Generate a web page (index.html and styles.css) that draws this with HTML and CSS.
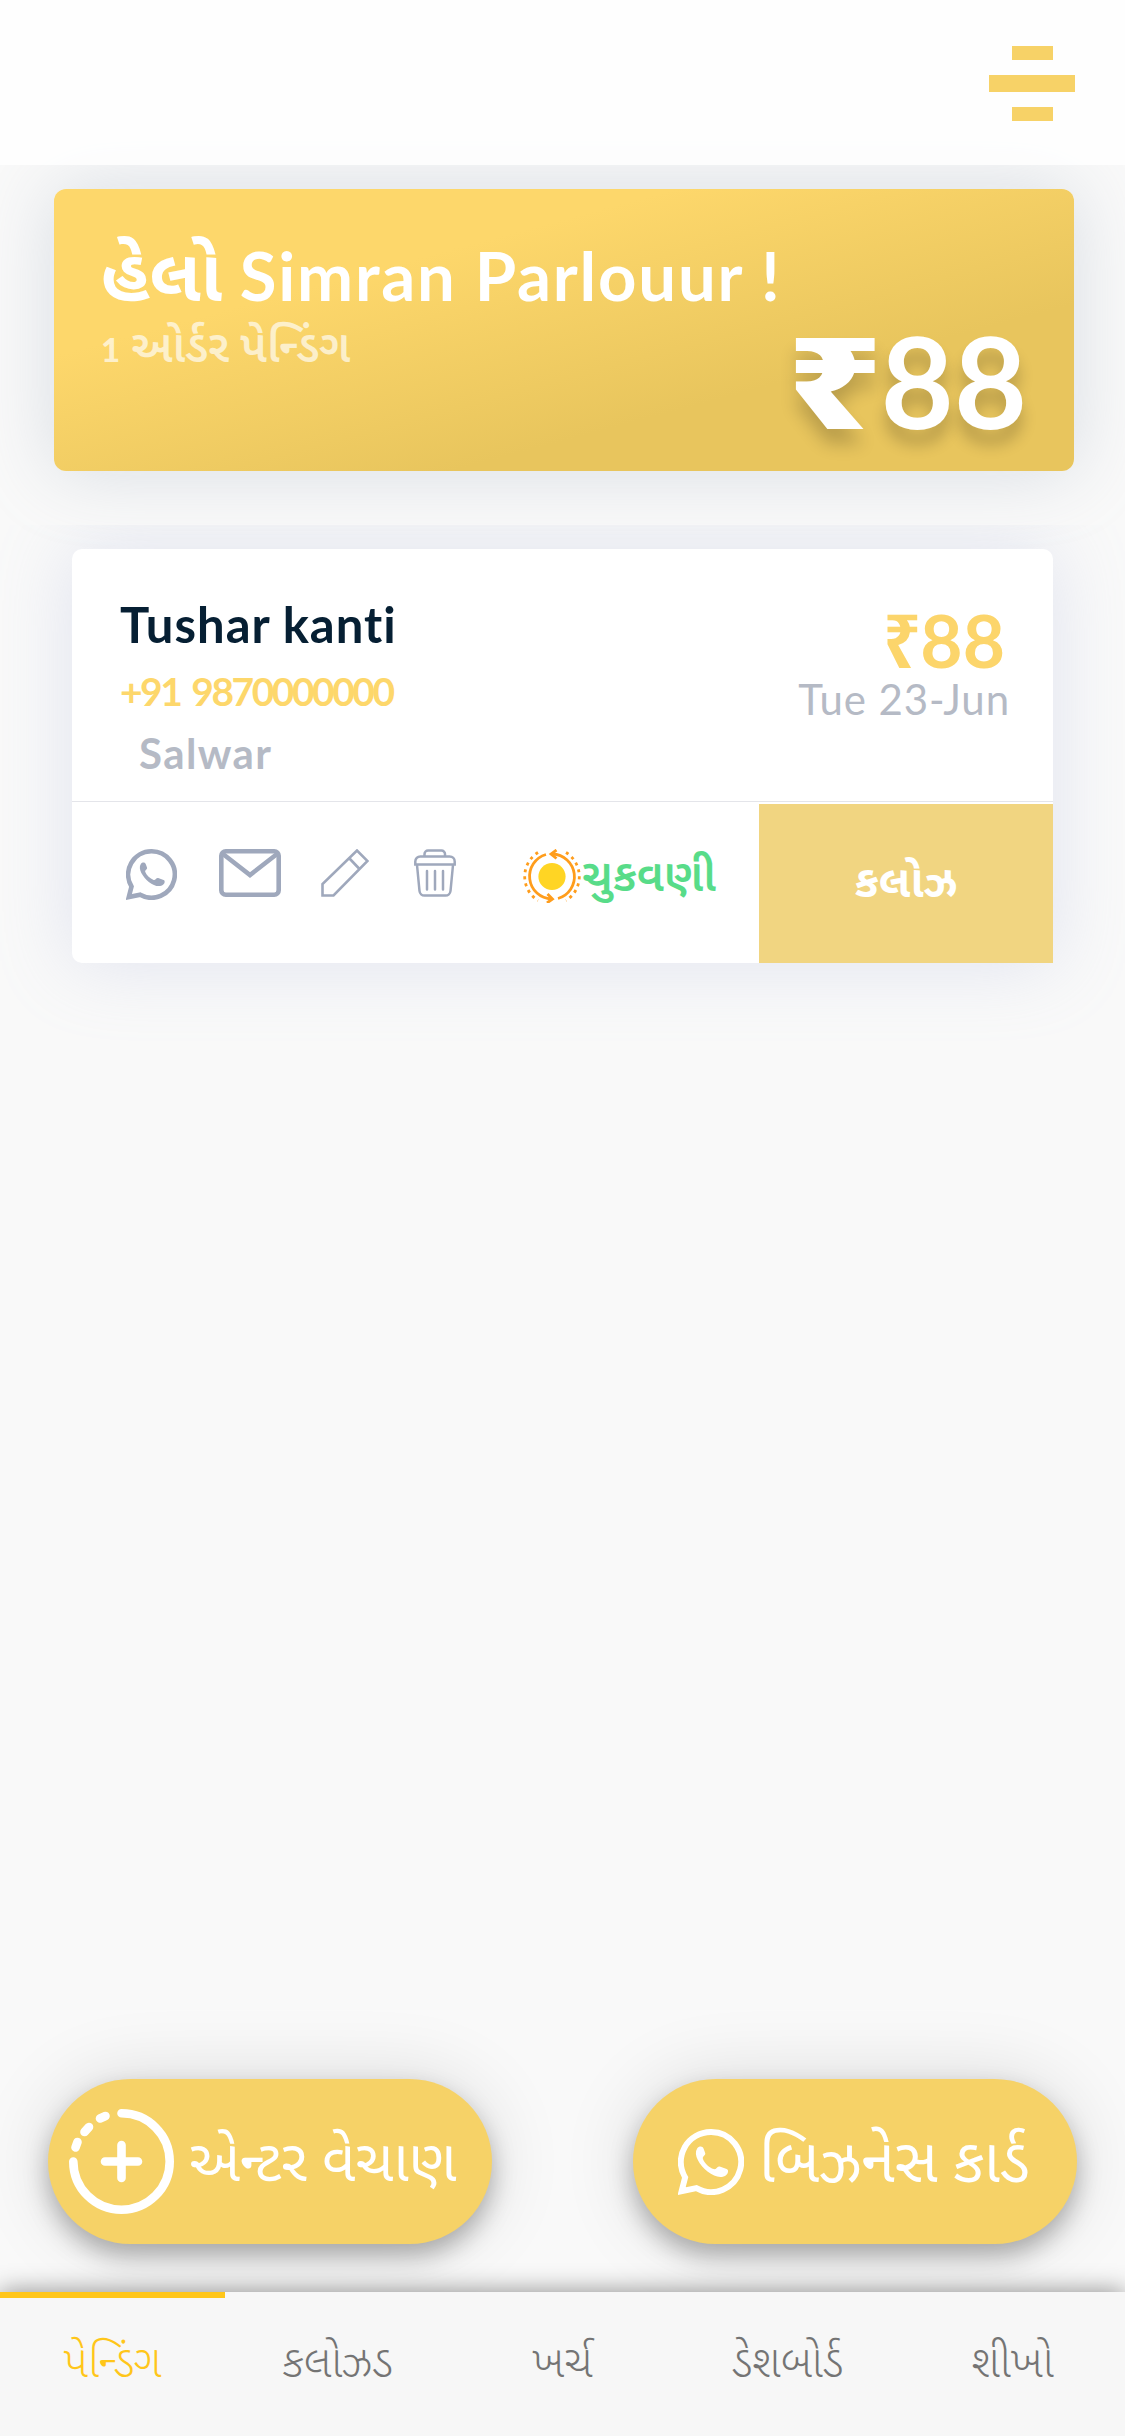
FILE: index.html
```html
<!DOCTYPE html>
<html lang="gu">
<head>
<meta charset="utf-8">
<title>Simran Parlouur</title>
<link rel="stylesheet" href="styles.css">
</head>
<body>
<div class="screen">
  <header class="topbar">
    <button class="menu" aria-label="Menu"><span class="bar"></span><span class="bar bar-wide"></span><span class="bar"></span></button>
  </header>
  <section class="summary">
    <h1 class="hello">હેલો <span class="shop">Simran Parlouur !</span></h1>
    <div class="pending"><span class="count">1</span> ઓર્ડર પેન્ડિંગ</div>
    <div class="total"><span class="rupee">₹</span>88</div>
  </section>
  <main class="orders">
    <article class="order">
      <div class="details">
        <div class="who">
          <div class="name">Tushar kanti</div>
          <div class="phone">+91 9870000000</div>
          <div class="item">Salwar</div>
        </div>
        <div class="due">
          <div class="price"><span class="rupee">₹</span>88</div>
          <div class="date">Tue 23-Jun</div>
        </div>
      </div>
      <div class="actions">
        <div class="tools">
          <svg class="ic-wa" viewBox="0 0 51 51"><path d="M25.500 2.300a23.200 23.200 0 1 1-11.300 43.400L2.800 48l2.700-10.500A23.200 23.200 0 0 1 25.500 2.300z" fill="none" stroke="currentColor" stroke-width="4.600"/><path d="M14.800 15c1.500-2 4.300-1.900 5 .2l1.200 3.400c.7 2-2.500 2.400-1.700 4.500 1.300 3.500 4.800 6.500 8.300 7.900 2 .7 2.600-2.700 4.600-2l5.400 1.900c1.700.6 1.300 3.300-.3 4.600-3.200 2.700-8.900 1.900-14.500-2.600-6-4.900-11.200-13-8-17.900z" fill="currentColor"/></svg>
          <svg class="ic-mail" viewBox="0 0 62 48"><rect x="2.300" y="2.300" width="57.400" height="43.400" rx="4.500" fill="none" stroke="currentColor" stroke-width="4.600"/><path d="M4 5l27 21L58 5" fill="none" stroke="currentColor" stroke-width="4.600"/></svg>
          <svg class="ic-pen" viewBox="0 0 48 48"><path d="M1.500 46.500V35L36 1.500 46.500 12 12.500 46.500zM28.500 9.500l10 10.500" fill="none" stroke="currentColor" stroke-width="2.600"/></svg>
          <svg class="ic-bin" viewBox="0 0 42 48"><g fill="none" stroke="currentColor" stroke-width="2.500"><path d="M10.500 7.500V5a3.500 3.500 0 0 1 3.500-3.500h13.500A3.500 3.500 0 0 1 31 5v2.500M1.300 15.500v-3a5 5 0 0 1 5-5h29.400a5 5 0 0 1 5 5v3zM3 16l2.500 26a5 5 0 0 0 5 4.500h21a5 5 0 0 0 5-4.500L39 16"/><path d="M13 22v18.500M21 22v18.500M29 22v18.500" stroke-linecap="round"/></g></svg>
        </div>
        <div class="pay">
          <svg class="ic-sun" viewBox="0 0 60 54"><circle cx="30" cy="27.500" r="13.600" fill="#ffd524"/><g fill="none" stroke="#ff9d1c" stroke-width="2.800"><path d="M24 5.500A22.700 22.700 0 0 0 29.500 50M36 49.500A22.700 22.700 0 0 0 30.500 5"/><path d="M25.500 45l5 5-5.500 4M34.500 1l-5.500 4 5.500 4.500"/><path d="M44 3.500A28.300 28.300 0 0 1 44 51.500M16 3.500A28.300 28.300 0 0 0 16 51.500" stroke-dasharray="3 4.100"/></g></svg>
          <span class="pay-label">ચુકવણી</span>
        </div>
        <button class="close"><span>કલોઝ</span></button>
      </div>
    </article>
  </main>
  <div class="fabs">
    <button class="fab fab-sale">
      <svg class="ic-plus" viewBox="0 0 105 105"><g fill="none" stroke="#fff" stroke-width="8.600" stroke-linecap="round"><path d="M52.500 4.300A48.200 48.200 0 1 1 4.300 52.500M52.500 36v33M36 52.500h33M6.500 38.500l2-5.500M15.500 23l4.500-5M31 9.500l5.500-2.500"/></g></svg>
      <span class="fab-label">એન્ટર વેચાણ</span>
    </button>
    <button class="fab fab-card">
      <svg class="ic-wa-big" viewBox="0 0 51 51"><path d="M25.500 2.300a23.200 23.200 0 1 1-11.300 43.400L2.800 48l2.700-10.500A23.200 23.200 0 0 1 25.500 2.300z" fill="none" stroke="currentColor" stroke-width="4.600"/><path d="M14.800 15c1.500-2 4.300-1.900 5 .2l1.200 3.400c.7 2-2.500 2.400-1.700 4.500 1.300 3.500 4.800 6.500 8.300 7.900 2 .7 2.600-2.700 4.600-2l5.400 1.900c1.700.6 1.300 3.300-.3 4.600-3.200 2.700-8.900 1.900-14.500-2.600-6-4.900-11.200-13-8-17.900z" fill="currentColor"/></svg>
      <span class="fab-label">બિઝનેસ કાર્ડ</span>
    </button>
  </div>
  <nav class="tabs">
    <a class="tab active">પેન્ડિંગ</a>
    <a class="tab">કલોઝડ</a>
    <a class="tab">ખર્ચ</a>
    <a class="tab">ડેશબોર્ડ</a>
    <a class="tab">શીખો</a>
  </nav>
</div>
</body>
</html>
```
FILE: styles.css
```css
* { box-sizing: border-box; }
body { margin: 0; background: #f9f9f9; font-family: Lato, "Noto Sans Gujarati", "Noto Sans", sans-serif; }
button { border: 0; padding: 0; background: none; font: inherit; color: inherit; }
svg { display: block; flex: none; }
.screen { width: 1125px; height: 2436px; display: flex; flex-direction: column; overflow: hidden; }
.topbar { height: 165px; flex: none; z-index: 1; background: rgba(255,255,255,.82); padding: 46px 50px 0 0; display: flex; justify-content: flex-end; align-items: flex-start; }
.menu { width: 86px; display: flex; flex-direction: column; align-items: center; gap: 15px; }
.bar { width: 41px; height: 14px; background: #f7d267; }
.bar-wide { width: 86px; height: 17px; }
.summary { flex: none; height: 282px; margin: 24px 51px 54px 54px; border-radius: 12px; padding: 47px 53px 0 47px; color: #fff; background: linear-gradient(165deg, #fdd76b 30%, #e8c55d 70%); box-shadow: 0 0 75px rgba(150,165,185,.32); display: flex; flex-direction: column; }
.hello { margin: 0; height: 82px; font-size: 73px; line-height: 75px; font-weight: 700; white-space: nowrap; }
.shop { font-size: 67px; letter-spacing: 1.800px; }
.pending { font-size: 45px; line-height: 54px; font-weight: 600; opacity: .65; }
.count { font-size: 33px; font-weight: 900; }
.total { font-size: 126px; line-height: 120px; font-weight: 700; align-self: flex-end; margin-top: -59px; margin-right: -6px; text-shadow: 0 15px 15px rgba(0,0,0,.2); }
.rupee { display: inline-block; font-family: "Noto Sans", sans-serif; font-weight: 900; line-height: 1; }
.total .rupee { transform: translateX(3px) scaleX(1.3); transform-origin: right; }
.orders { flex: 1; overflow: hidden; padding: 24px 72px; }
.order { background: #fff; border-radius: 10px 10px 0 10px; box-shadow: 0 0 75px rgba(170,180,220,.3); height: 414px; display: flex; flex-direction: column; }
.details { height: 253px; border-bottom: 1px solid #e4e5ea; display: flex; justify-content: space-between; padding: 46px 43px 0 48px; }
.name { font-size: 49px; line-height: 58px; height: 60px; font-weight: 700; color: #061f33; letter-spacing: 1px; }
.phone { font-size: 39px; line-height: 72px; height: 70px; font-weight: 700; color: #fdd76b; letter-spacing: -2.500px; word-spacing: 4px; }
.item { font-size: 42px; line-height: 56px; font-weight: 700; color: #b5bac5; padding-left: 19px; letter-spacing: 1.400px; }
.due { text-align: right; }
.price { font-size: 73px; line-height: 90px; height: 84px; font-weight: 700; color: #fcd56b; padding-right: 5px; }
.price .rupee { font-weight: 700; transform: scaleX(.9); transform-origin: right; }
.date { font-size: 42px; line-height: 40px; color: #b5bac5; letter-spacing: .9px; }
.actions { flex: 1; display: flex; padding-top: 2px; }
.tools { display: flex; padding: 45px 0 0 54px; color: #9fa8bc; width: 450px; }
.ic-wa { width: 51px; height: 51px; margin-right: 42px; }
.ic-mail { width: 62px; height: 48px; margin-right: 40px; }
.ic-pen { width: 48px; height: 48px; margin-right: 45px; }
.ic-bin { width: 42px; height: 48px; }
.pay { display: flex; width: 237px; padding-top: 45px; color: #58dc89; }
.ic-sun { width: 60px; height: 54px; }
.pay-label { font-size: 45px; line-height: 50px; font-weight: 600; white-space: nowrap; }
.close { flex: 1; background: #f1d581; color: #fff; font-size: 45px; font-weight: 700; }
.fabs { flex: none; display: flex; justify-content: space-between; padding: 0 48px 48px; }
.fab { height: 165px; border-radius: 83px; background: #f6d267; color: #fff; display: flex; align-items: center; box-shadow: 0 12px 24px rgba(0,0,0,.28), 0 0 75px rgba(0,0,0,.13); white-space: nowrap; }
.fab-sale { width: 444px; padding-left: 21px; }
.fab-card { width: 444px; padding-left: 45px; }
.ic-plus { width: 105px; height: 105px; }
.ic-wa-big { width: 66px; height: 66px; }
.fab-label { font-size: 58px; font-weight: 400; margin-left: 15px; padding-top: 5px; }
.fab-card .fab-label { font-size: 60.500px; }
.tabs { flex: none; height: 144px; background: #f7f7f7; box-shadow: 0 0 24px rgba(0,0,0,.45); display: flex; z-index: 1; }
.tab { flex: 1; text-align: center; font-size: 44px; font-weight: 350; line-height: 124px; border-top: 6px solid transparent; color: #747474; }
.active { color: #ffc61a; border-color: #ffc61a; }
```
